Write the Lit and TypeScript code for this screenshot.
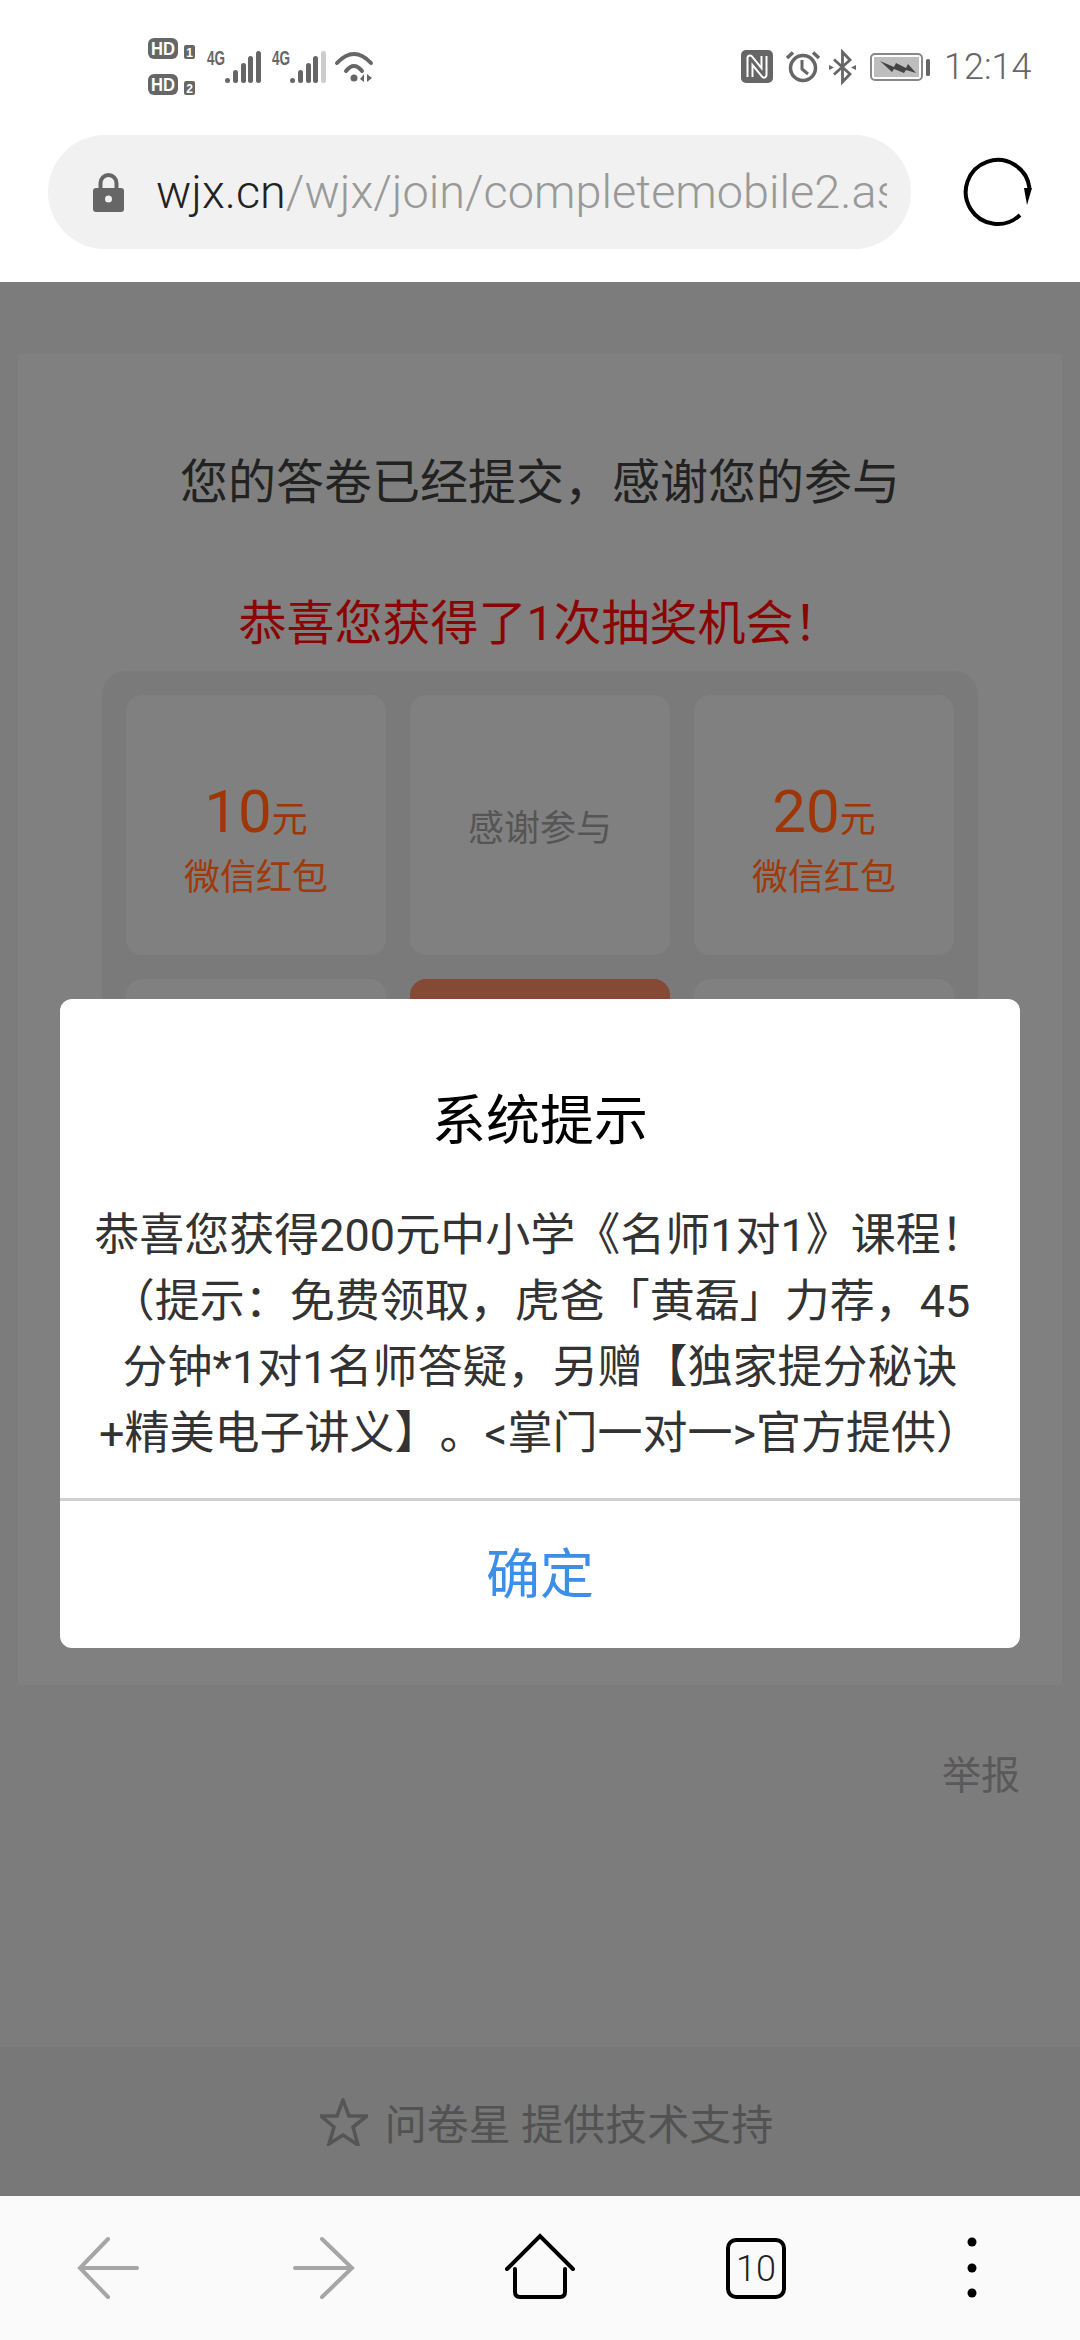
/**
 * Survey-complete page in a mobile browser, with the prize dialog open.
 */

import { LitElement, html, svg, css } from 'lit';
import { customElement } from 'lit/decorators.js';

interface Prize {
  amount?: string;
  label?: string;
  active?: boolean;
}

// only the top row is ever seen, the rest sits behind the dialog
const PRIZES: Prize[] = [
  { amount: '10', label: '微信红包' },
  { label: '感谢参与' },
  { amount: '20', label: '微信红包' },
  {},
  { active: true },
  {},
  {},
  {},
  {},
];

@customElement('app-root')
export class AppRoot extends LitElement {
  static styles = css`
    :host {
      display: block;
      position: relative;
      width: 1080px;
      height: 2340px;
      overflow: hidden;
      font-family: Roboto, 'Noto Sans CJK SC', sans-serif;
      background: #7c7c7c;
      text-spacing-trim: space-all;
    }
    .shell {
      display: flex;
      flex-direction: column;
      height: 2340px;
    }

    /* top chrome */
    .chrome {
      background: #fff;
      height: 282px;
      flex: none;
    }
    .status {
      height: 133px;
      display: flex;
      align-items: center;
      padding: 0 52px 0 148px;
    }
    .status svg {
      display: block;
      flex: none;
      overflow: visible;
    }
    .status text {
      font-family: 'Liberation Sans', sans-serif;
      font-weight: 700;
      fill: #666;
    }
    .status text.inv { fill: #fff; }
    .hd { margin-right: 12px; }
    .sig { margin-right: 8px; }
    .sig.second { margin-right: 6px; }
    .icons-right {
      margin-left: auto;
      display: flex;
      align-items: center;
    }
    .nfc { margin-right: 13px; }
    .alarm { margin-right: 9px; }
    .bt { margin-right: 14px; }
    .batt { margin-right: 14px; }
    .time {
      font-size: 36px;
      font-weight: 300;
      color: #666;
      line-height: 40px;
      width: 84px;
      white-space: nowrap;
    }
    .url-row {
      display: flex;
      align-items: center;
      padding: 2px 0 0 48px;
    }
    .pill {
      width: 863px;
      height: 114px;
      box-sizing: border-box;
      background: #f1f1f1;
      border-radius: 57px;
      display: flex;
      align-items: center;
      padding: 0 24px 0 45px;
      flex: none;
    }
    .lock { flex: none; margin-right: 32px; }
    .url {
      flex: 1;
      overflow: hidden;
      white-space: nowrap;
      font-size: 46.8px;
      font-weight: 300;
      line-height: 60px;
      color: #999;
    }
    .url b {
      font-weight: 300;
      color: #222;
    }
    .reload { flex: none; margin-left: 52px; display: block; }

    /* page under the dim */
    .page {
      flex: 1;
      display: flex;
      flex-direction: column;
      padding-top: 72px;
      background: #7c7c7c;
      min-height: 0;
    }
    .card {
      margin: 0 18px;
      height: 1331px;
      box-sizing: border-box;
      background: #808080;
      padding-top: 96px;
      display: flex;
      flex-direction: column;
      align-items: center;
      flex: none;
    }
    .done {
      font-size: 48px;
      line-height: 66px;
      color: #222;
      margin: 0;
    }
    .lucky {
      font-size: 48px;
      line-height: 66px;
      color: #8b0505;
      margin: 75px 0 14px;
    }
    .panel {
      width: 876px;
      box-sizing: border-box;
      padding: 24px;
      background: #7a7a7a;
      border-radius: 24px;
      display: grid;
      grid-template-columns: repeat(3, 260px);
      grid-auto-rows: 260px;
      gap: 24px;
    }
    .cell {
      background: #808080;
      border-radius: 16px;
      display: flex;
      flex-direction: column;
      align-items: center;
      justify-content: center;
      font-size: 36px;
      color: #9f3a0b;
    }
    .cell.active { background: #854a36; }
    .cell .none { color: #555; }
    .amount {
      font-size: 60px;
      line-height: 66px;
      color: #9f3608;
      padding-top: 32px;
    }
    .amount span { font-size: 36px; }
    .prize-label { line-height: 50px; }
    .report {
      text-align: right;
      padding: 66px 60px 0 0;
      font-size: 39px;
      line-height: 50px;
      color: #595959;
    }
    .support {
      margin-top: auto;
      height: 149px;
      box-sizing: border-box;
      background: #787878;
      display: flex;
      align-items: center;
      justify-content: center;
      gap: 17px;
      font-size: 42px;
      color: #525252;
      padding-left: 13px;
      flex: none;
    }

    /* bottom browser bar */
    .nav {
      height: 144px;
      flex: none;
      background: #fafafa;
      display: grid;
      grid-template-columns: repeat(5, 1fr);
      align-items: center;
      justify-items: center;
    }
    .nav svg { display: block; }
    .nav text {
      font-family: Roboto, sans-serif;
      font-weight: 300;
      font-size: 36px;
      fill: #222;
    }

    /* dialog */
    .dialog {
      position: absolute;
      left: 60px;
      top: 999px;
      width: 960px;
      background: #fff;
      border-radius: 12px;
      overflow: hidden;
      text-align: center;
    }
    .dialog h2 {
      margin: 0;
      padding-top: 87px;
      font-size: 54px;
      font-weight: 400;
      line-height: 72px;
      color: #000;
    }
    .dialog p {
      margin: 45px 0 0;
      padding: 0 30px 31px;
      font-size: 45px;
      line-height: 66px;
      color: #333;
      white-space: nowrap;
      border-bottom: 3px solid #d0d0d0;
    }
    .ok {
      height: 147px;
      box-sizing: border-box;
      padding-bottom: 9px;
      display: flex;
      align-items: center;
      justify-content: center;
      font-size: 54px;
      color: #3b8fe8;
    }
  `;

  private renderHd() {
    return html`
      <svg class="hd" width="47" height="57" viewBox="0 0 47 57">
        <rect x="0" y="0" width="30" height="21" rx="6" fill="#666"></rect>
        <text class="inv" x="15" y="17" font-size="18" text-anchor="middle" textLength="24" lengthAdjust="spacingAndGlyphs">HD</text>
        <rect x="36" y="7" width="11" height="14" rx="2" fill="#666"></rect>
        <text class="inv" x="41.5" y="19" font-size="12" text-anchor="middle">1</text>
        <rect x="0" y="36" width="30" height="21" rx="6" fill="#666"></rect>
        <text class="inv" x="15" y="53" font-size="18" text-anchor="middle" textLength="24" lengthAdjust="spacingAndGlyphs">HD</text>
        <rect x="36" y="43" width="11" height="14" rx="2" fill="#666"></rect>
        <text class="inv" x="41.5" y="55" font-size="12" text-anchor="middle">2</text>
      </svg>
    `;
  }

  private renderSignal(lastColor: string, extra = '') {
    const bars = [
      { x: 18, top: 28, color: '#666' },
      { x: 26, top: 20, color: '#666' },
      { x: 34, top: 13, color: '#666' },
      { x: 41, top: 6, color: '#666' },
      { x: 49, top: 1, color: lastColor },
    ];
    return html`
      <svg class="sig ${extra}" width="57" height="34" viewBox="0 0 57 34">
        <text x="0" y="15" font-size="20" textLength="18" lengthAdjust="spacingAndGlyphs">4G</text>
        ${bars.map(
          b => svg`<rect x=${b.x} y=${b.top} width="5" height=${33 - b.top} rx="2.5" fill=${b.color}></rect>`
        )}
      </svg>
    `;
  }

  private renderWifi() {
    return html`
      <svg width="38" height="33" viewBox="0 0 38 33">
        <path d="M2 13 Q19 -5 36 13" fill="none" stroke="#666" stroke-width="4" stroke-linecap="round"></path>
        <path d="M11 21 Q19 11 27 21" fill="none" stroke="#666" stroke-width="4" stroke-linecap="round"></path>
        <circle cx="19" cy="28" r="3.5" fill="#666"></circle>
        <path d="M29 32 L29 24 L25 29 Z M32 24 L32 32 L37 28 Z" fill="#666"></path>
      </svg>
    `;
  }

  private renderStatusRight() {
    return html`
      <div class="icons-right">
        <svg class="nfc" width="32" height="33" viewBox="0 0 32 33">
          <rect width="32" height="33" rx="5" fill="#666"></rect>
          <path d="M9 27 V8 L23 25 V6" fill="none" stroke="#fff" stroke-width="7" stroke-linejoin="round"></path>
          <path d="M9 27 V8 L23 25 V6" fill="none" stroke="#666" stroke-width="3" stroke-linejoin="round"></path>
        </svg>
        <svg class="alarm" width="34" height="31" viewBox="0 0 34 31">
          <circle cx="17" cy="17" r="12.5" fill="none" stroke="#666" stroke-width="3.5"></circle>
          <path d="M16 9 V18 L22 23" fill="none" stroke="#666" stroke-width="3"></path>
          <path d="M1 7 L7 1.5 M27 1.5 L33 7" fill="none" stroke="#666" stroke-width="3.5"></path>
        </svg>
        <svg class="bt" width="27" height="34" viewBox="0 0 27 34">
          <path d="M5 9.5 L21 24 L13.5 32 V2 L21 10 L5 24.5" fill="none" stroke="#666" stroke-width="2.8"></path>
          <path d="M0 15 L5 17.5 L0 20 Z M27 15 L22 17.5 L27 20 Z" fill="#666"></path>
        </svg>
        <svg class="batt" width="60" height="28" viewBox="0 0 60 28">
          <rect x="1" y="1" width="51" height="26" rx="4" fill="#fff" stroke="#888" stroke-width="2"></rect>
          <rect x="4" y="4" width="45" height="20" fill="#bdbdbd"></rect>
          <path d="M10 8 L24 14 L26 10 L36 15 L38 11 L46 20 L36 17 L34 20 L24 16 L22 19 Z" fill="#444"></path>
          <rect x="56" y="6" width="4" height="17" rx="1.5" fill="#666"></rect>
        </svg>
        <span class="time">12:14</span>
      </div>
    `;
  }

  private renderCell(p: Prize) {
    if (p.active) return html`<div class="cell active"></div>`;
    if (!p.label) return html`<div class="cell"></div>`;
    if (!p.amount) {
      return html`<div class="cell"><span class="none">${p.label}</span></div>`;
    }
    return html`
      <div class="cell">
        <div class="amount">${p.amount}<span>元</span></div>
        <div class="prize-label">${p.label}</div>
      </div>
    `;
  }

  render() {
    return html`
      <div class="shell">
        <div class="chrome">
          <div class="status">
            ${this.renderHd()} ${this.renderSignal('#666')}
            ${this.renderSignal('#ccc', 'second')} ${this.renderWifi()}
            ${this.renderStatusRight()}
          </div>
          <div class="url-row">
            <div class="pill">
              <svg class="lock" width="31" height="39" viewBox="0 0 31 39">
                <path d="M7.5 17 V10 a8 8 0 0 1 16 0 V17" fill="none" stroke="#666" stroke-width="4"></path>
                <rect x="0" y="15" width="31" height="24" rx="3" fill="#666"></rect>
                <circle cx="15.5" cy="26" r="3.5" fill="#f1f1f1"></circle>
              </svg>
              <div class="url"><b>wjx.cn</b>/wjx/join/completemobile2.aspx</div>
            </div>
            <svg class="reload" width="70" height="70" viewBox="0 0 70 70">
              <path d="M57 58 A32 32 0 1 1 66.5 31" fill="none" stroke="#000" stroke-width="4"></path>
              <path d="M61 31 H69 L64 48 Z" fill="#000"></path>
            </svg>
          </div>
        </div>

        <div class="page">
          <div class="card">
            <p class="done">您的答卷已经提交，感谢您的参与</p>
            <div class="lucky">恭喜您获得了1次抽奖机会！</div>
            <div class="panel">${PRIZES.map(p => this.renderCell(p))}</div>
          </div>
          <div class="report">举报</div>
          <div class="support">
            <svg width="48" height="48" viewBox="0 0 48 48">
              <path
                d="M23 2 L29 18 L47 18 L33 29 L38 47 L23 37 L9 46 L14 29 L1 18 L17 18 Z"
                fill="none"
                stroke="#555"
                stroke-width="3.5"
              ></path>
            </svg>
            <span>问卷星 提供技术支持</span>
          </div>
        </div>

        <div class="nav">
          <svg width="72" height="72" viewBox="0 0 72 72">
            <path d="M36 7 L8 36 L36 65 M8 36 H65" fill="none" stroke="#a6a6a6" stroke-width="4" stroke-linecap="round"></path>
          </svg>
          <svg width="72" height="72" viewBox="0 0 72 72">
            <path d="M34 7 L64 36 L34 65 M64 36 H7" fill="none" stroke="#a6a6a6" stroke-width="4" stroke-linecap="round"></path>
          </svg>
          <svg width="72" height="72" viewBox="0 0 72 72">
            <path d="M3 37 L36 4 L69 37" fill="none" stroke="#000" stroke-width="4" stroke-linecap="round"></path>
            <path d="M11 37 V60 Q11 65 16 65 H56 Q61 65 61 60 V37" fill="none" stroke="#000" stroke-width="4" stroke-linecap="round"></path>
          </svg>
          <svg width="72" height="72" viewBox="0 0 72 72">
            <rect x="8" y="8" width="56" height="57" rx="8" fill="none" stroke="#000" stroke-width="4"></rect>
            <text x="36" y="49" text-anchor="middle">10</text>
          </svg>
          <svg width="72" height="72" viewBox="0 0 72 72">
            <circle cx="36" cy="10" r="4.5" fill="#000"></circle>
            <circle cx="36" cy="36" r="4.5" fill="#000"></circle>
            <circle cx="36" cy="61" r="4.5" fill="#000"></circle>
          </svg>
        </div>
      </div>

      <div class="dialog">
        <h2>系统提示</h2>
        <p>
          恭喜您获得200元中小学《名师1对1》课程！<br />
          （提示：免费领取，虎爸「黄磊」力荐，45<br />
          分钟*1对1名师答疑，另赠【独家提分秘诀<br />
          +精美电子讲义】。&lt;掌门一对一&gt;官方提供）
        </p>
        <div class="ok">确定</div>
      </div>
    `;
  }
}
